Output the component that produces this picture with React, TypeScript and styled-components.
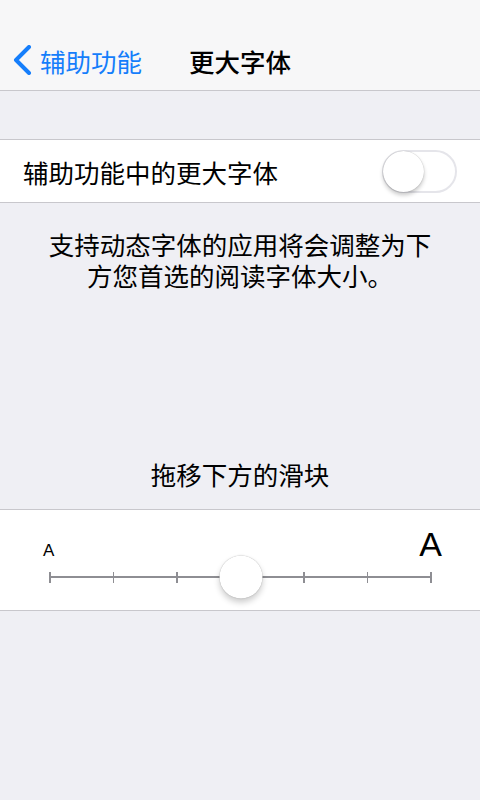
import React, { useState } from 'react';
import styled, { createGlobalStyle } from 'styled-components';

const GlobalStyle = createGlobalStyle`
  html, body {
    margin: 0;
    padding: 0;
    background: #efeff4;
  }
  body {
    font-family: "Liberation Sans", "Noto Sans CJK SC", sans-serif;
    color: #000;
  }
`;

const Screen = styled.div`
  width: 480px;
  min-height: 800px;
  background: #efeff4;
  font-family: "Noto Sans CJK SC", sans-serif;
`;

const NavBar = styled.header`
  height: 91px;
  padding-top: 30px;
  box-sizing: border-box;
  background: #f7f7f8;
  border-bottom: 1px solid #c8c7cc;
  display: grid;
  grid-template-columns: 1fr auto 1fr;
  align-items: center;
`;

const BackButton = styled.button`
  justify-self: start;
  display: flex;
  align-items: center;
  gap: 8px;
  padding: 0 0 0 12px;
  border: none;
  background: none;
  color: #157efb;
  font-family: inherit;
  font-size: 25.5px;
  line-height: 31px;
  cursor: pointer;
`;

const Title = styled.h1`
  margin: 0;
  font-size: 25.5px;
  font-weight: 500;
  line-height: 31px;
`;

const Group = styled.section<{ $top: number }>`
  margin-top: ${(p) => p.$top}px;
  background: #fff;
  border-top: 1px solid #c8c7cc;
  border-bottom: 1px solid #c8c7cc;
`;

const Row = styled.div`
  height: 62px;
  display: flex;
  align-items: center;
  justify-content: space-between;
  padding: 0 23px;
  font-size: 25.5px;
`;

const Switch = styled.button<{ $on: boolean }>`
  position: relative;
  width: 75px;
  height: 43px;
  padding: 0;
  border-radius: 22px;
  border: 2px solid ${(p) => (p.$on ? '#4cd964' : '#e5e5ea')};
  background: ${(p) => (p.$on ? '#4cd964' : '#fff')};
  cursor: pointer;
  box-sizing: border-box;

  &::after {
    content: '';
    position: absolute;
    top: -1px;
    left: ${(p) => (p.$on ? '32px' : '-1px')};
    width: 41px;
    height: 41px;
    border-radius: 50%;
    background: #fff;
    box-shadow: 0 3px 4px rgba(0, 0, 0, 0.22), 0 0 1px rgba(0, 0, 0, 0.3);
  }
`;

const Note = styled.p<{ $top: number }>`
  margin: ${(p) => p.$top}px 0 0;
  text-align: center;
  font-size: 25.5px;
  line-height: 31px;
`;

const SliderBody = styled.div`
  height: 100px;
  padding: 17px 38px 0 43px;
  box-sizing: border-box;
`;

const Sizes = styled.div`
  display: flex;
  justify-content: space-between;
  align-items: baseline;
  font-family: "Liberation Sans", sans-serif;
  line-height: 1;
`;

const SizeMark = styled.span<{ $size: number }>`
  font-size: ${(p) => p.$size}px;
`;

const Track = styled.div`
  position: relative;
  margin: 6px 10px 0 6px;
  height: 20px;
  display: flex;
  justify-content: space-between;
  align-items: center;

  &::before {
    content: '';
    position: absolute;
    left: 0;
    right: 0;
    top: 9px;
    height: 2px;
    background: #8e8e93;
  }
`;

const Tick = styled.span`
  width: 1.5px;
  height: 11px;
  background: #8e8e93;
`;

const Knob = styled.span`
  position: absolute;
  top: 50%;
  width: 43px;
  height: 43px;
  border-radius: 50%;
  background: #fff;
  transform: translate(-50%, -50%);
  box-shadow: 0 4px 6px rgba(0, 0, 0, 0.2), 0 0 1px rgba(0, 0, 0, 0.35);
`;

const Chevron = () => (
  <svg width="20" height="30" viewBox="0 0 20 30">
    <path d="M17 2 L4 15 L17 28" fill="none" stroke="#157efb" strokeWidth="4" strokeLinecap="round" strokeLinejoin="round" />
  </svg>
);

const STEPS = 7;

export default function App() {
  const [larger, setLarger] = useState(false);
  const [step, setStep] = useState(3);

  return (
    <Screen>
      <GlobalStyle />
      <NavBar>
        <BackButton>
          <Chevron />
          辅助功能
        </BackButton>
        <Title>更大字体</Title>
        <span />
      </NavBar>

      <Group $top={48}>
        <Row>
          辅助功能中的更大字体
          <Switch $on={larger} onClick={() => setLarger(!larger)} aria-label="更大字体" />
        </Row>
      </Group>

      <Note $top={25}>
        支持动态字体的应用将会调整为下
        <br />
        方您首选的阅读字体大小。
      </Note>

      <Note $top={168}>拖移下方的滑块</Note>

      <Group $top={20}>
        <SliderBody>
          <Sizes>
            <SizeMark $size={17}>A</SizeMark>
            <SizeMark $size={34}>A</SizeMark>
          </Sizes>
          <Track>
            {Array.from({ length: STEPS }, (_, i) => (
              <Tick key={i} onClick={() => setStep(i)} />
            ))}
            <Knob style={{ left: `${(step / (STEPS - 1)) * 100}%` }} />
          </Track>
        </SliderBody>
      </Group>
    </Screen>
  );
}
